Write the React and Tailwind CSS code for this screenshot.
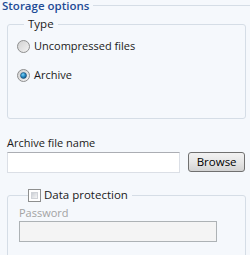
import React from "react";

function Radio({ checked }) {
  return (
    <svg width="13" height="13" viewBox="0 0 13 13" className="shrink-0">
      <defs>
        <linearGradient id="rb" x1="0" y1="0" x2="1" y2="1">
          <stop offset="0" stopColor="#d0d0d0" />
          <stop offset="1" stopColor="#f4f4f4" />
        </linearGradient>
        <radialGradient id="rd" cx="0.4" cy="0.35" r="0.7">
          <stop offset="0" stopColor="#7fd3f5" />
          <stop offset="0.5" stopColor="#2a8fc8" />
          <stop offset="1" stopColor="#0d4f7e" />
        </radialGradient>
      </defs>
      <circle cx="6.5" cy="6.5" r="6" fill="url(#rb)" stroke="#8e8f8f" strokeWidth="1" />
      {checked && <circle cx="6.5" cy="6.5" r="3" fill="url(#rd)" stroke="#1b4d75" strokeWidth="0.6" />}
    </svg>
  );
}

function Check() {
  return (
    <span className="shrink-0 w-[13px] h-[13px] border border-[#8e8f8f] bg-white p-[2px] flex">
      <span className="flex-1 bg-gradient-to-br from-[#cbcfd5] to-[#f6f6f6] border border-[#d0d3d8]" />
    </span>
  );
}

export default function App() {
  return (
    <div
      className="w-[250px] h-[255px] overflow-hidden bg-[#f5f8fc] text-[11px] leading-[16px] text-[#1a1a1a]"
      style={{ fontFamily: '"Open Sans", "Noto Sans", sans-serif' }}
    >
      <div className="flex items-center h-[11px]">
        <span className="pl-[2px] text-[#1e4c96] font-semibold text-[11.5px] leading-[12px] whitespace-nowrap">Storage options</span>
        <span className="flex-1 ml-[4px] h-[2px] border-t border-[#d5dde6] border-b-white" />
      </div>

      <fieldset className="ml-[7px] mr-[4px] mt-[5px] border border-[#d5dde6] rounded-[3px] pl-[9px] pb-[35px]">
        <legend className="ml-[7px] px-[4px] text-[11.5px]">Type</legend>
        <div className="flex items-center gap-[4px] mt-[6px]">
          <Radio />
          <span>Uncompressed files</span>
        </div>
        <div className="flex items-center gap-[4px] mt-[13px]">
          <Radio checked />
          <span>Archive</span>
        </div>
      </fieldset>

      <div className="ml-[7px] mt-[16px]">Archive file name</div>
      <div className="flex items-start ml-[7px] mr-[5px] mt-[1px]">
        <div className="w-[174px] h-[21px] bg-white border border-[#dbdfe6] border-t-[#abadb3]" />
        <button className="ml-[8px] w-[57px] h-[20px] rounded-[3px] border border-[#707070] bg-gradient-to-b from-[#f2f2f2] via-[#e6e6e6] to-[#d3d3d3] text-[11.5px] leading-[16px] text-black">
          Browse
        </button>
      </div>

      <fieldset className="ml-[7px] mr-[4px] mt-[14px] border border-[#d5dde6] rounded-[3px] pl-[11px] pr-[28px] pb-[20px]">
        <legend className="ml-[9px] pr-[4px] flex items-center gap-[3px] text-[11.5px]">
          <Check />
          <span>Data protection</span>
        </legend>
        <div className="mt-[2px] text-[#a3a3a3]">Password</div>
        <div className="h-[21px] bg-[#f4f4f4] border border-[#adb2b5]" />
      </fieldset>
    </div>
  );
}
